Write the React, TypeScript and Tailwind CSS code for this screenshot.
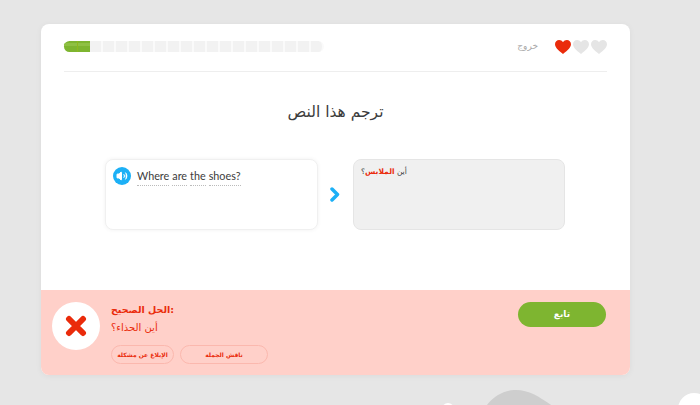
import { Volume2 } from "lucide-react";

const arabic = "font-['DejaVu_Sans',sans-serif]";

function Heart({ color }: { color: string }) {
  return (
    <svg width="16" height="14" viewBox="0 0 16 14">
      <path
        d="M8 14C6 12 0 8.500 0 4.200C0 1.700 1.900 0 4.100 0C5.700 0 7.100 0.800 8 2.200C8.900 0.800 10.300 0 11.900 0C14.100 0 16 1.700 16 4.200C16 8.500 10 12 8 14Z"
        fill={color}
      />
    </svg>
  );
}

function ProgressBar() {
  const segments = Array.from({ length: 18 });
  return (
    <div className="flex w-[260px] h-[11px]">
      <div className="relative w-[26px] h-full rounded-l-full bg-[#7eb530]">
        <div className="absolute left-0 right-0 top-[2px] h-[3px] bg-[#8fc044] rounded-l-full" />
        <div className="absolute left-[13px] top-0 bottom-0 w-px bg-[#8fb820]" />
      </div>
      {segments.map((_, i) => (
        <div
          key={i}
          className={`w-[13px] h-full border-r-2 border-[#fafafa] bg-[#f2f2f2] ${
            i === 17 ? "rounded-r-full border-r-0" : ""
          }`}
        />
      ))}
    </div>
  );
}

export default function App() {
  return (
    <div className="relative w-[700px] h-[405px] overflow-hidden bg-[#e6e6e6] pt-6 pl-[41px]">
      <svg
        className="absolute left-[440px] top-[385px]"
        width="260"
        height="20"
        viewBox="0 0 260 20"
      >
        <path d="M44 24C52 12 62 6 74 5C88 4 100 12 114 22Z" fill="#cecece" />
        <circle cx="8" cy="24" r="6" fill="#ffffff" />
        <circle cx="254" cy="24" r="16" fill="#ffffff" />
      </svg>

      <div className="relative w-[589px] h-[351px] flex flex-col bg-white rounded-lg overflow-hidden shadow-[0_1px_6px_rgba(0,0,0,0.05)]">
        <div className="flex-1 px-[23px] pt-[17px]">
          <div className="flex items-center justify-between h-[30px] pb-[19px]">
            <ProgressBar />
            <div className="flex items-center">
              <span className={`${arabic} text-[9px] text-[#a9a9a9] mr-[17px]`}>خروج</span>
              <div className="flex gap-[2px]">
                <Heart color="#ea2b0b" />
                <Heart color="#e5e5e5" />
                <Heart color="#e5e5e5" />
              </div>
            </div>
          </div>
          <div className="h-px bg-[#eeeeee]" />

          <h1 className={`${arabic} mt-[30px] text-center text-[15.500px] leading-[20px] text-[#3c3c3c]`}>
            ترجم هذا النص
          </h1>

          <div className="flex items-center mt-[37px] pl-[41px]">
            <div className="w-[213px] h-[71px] flex items-start gap-[6px] bg-white rounded-lg border border-[#f0f0f0] shadow-[0_0_4px_rgba(0,0,0,0.06)] pl-[7px] pt-[7px]">
              <div className="w-[18px] h-[18px] rounded-full bg-[#1cb0f6] flex items-center justify-center">
                <Volume2 size={12} className="text-white" fill="white" strokeWidth={2} />
              </div>
              <div className="flex gap-[3px] font-['Lato',sans-serif] text-[10.800px] leading-[18px] text-[#3c3c3c]">
                {["Where", "are", "the", "shoes?"].map((word) => (
                  <span key={word} className="border-b border-dotted border-[#bbbbbb] h-[19px]">
                    {word}
                  </span>
                ))}
              </div>
            </div>

            <svg className="ml-[12px] mr-[13px]" width="10" height="15" viewBox="0 0 10 15">
              <path
                d="M2 2L7.500 7.500L2 13"
                fill="none"
                stroke="#1cb0f6"
                strokeWidth="3.500"
                strokeLinecap="round"
                strokeLinejoin="round"
              />
            </svg>

            <div
              className={`${arabic} w-[212px] h-[71px] bg-[#f0f0f0] rounded-lg border border-[#e5e5e5] pl-[7px] pt-[5px] text-[7.500px] leading-[14px] text-[#3c3c3c]`}
            >
              أين <span className="text-[#ea2b0b] font-bold">الملابس</span>؟
            </div>
          </div>
        </div>

        <div className="h-[85px] bg-[#ffd0c9] flex justify-between pl-[11px] pr-[24px] pt-[12px]">
          <div className="flex">
            <div className="w-[48px] h-[48px] rounded-full bg-white flex items-center justify-center">
              <svg width="22" height="22" viewBox="0 0 22 22">
                <path
                  d="M4 4L18 18M18 4L4 18"
                  stroke="#ea2b0b"
                  strokeWidth="6"
                  strokeLinecap="round"
                />
              </svg>
            </div>
            <div className={`${arabic} ml-[11px] text-[#ea2b0b]`}>
              <div className="text-[9.500px] leading-[16px] font-bold h-[16px] whitespace-nowrap">
                الحل الصحيح:
              </div>
              <div className="text-[10px] leading-[18px] mt-[1px] whitespace-nowrap">
                أين الحذاء؟
              </div>
              <div className="flex gap-[6px] mt-[8px]">
                <button className="w-[63px] h-[19px] rounded-full border border-[#fbb8ae] text-[6px] font-bold whitespace-nowrap">
                  الإبلاغ عن مشكلة
                </button>
                <button className="w-[88px] h-[19px] rounded-full border border-[#fbb8ae] text-[6px] font-bold whitespace-nowrap">
                  ناقش الجملة
                </button>
              </div>
            </div>
          </div>
          <button
            className={`${arabic} w-[88px] h-[25px] rounded-full bg-[#7eb530] text-white text-[9px] font-bold`}
          >
            تابع
          </button>
        </div>
      </div>
    </div>
  );
}
